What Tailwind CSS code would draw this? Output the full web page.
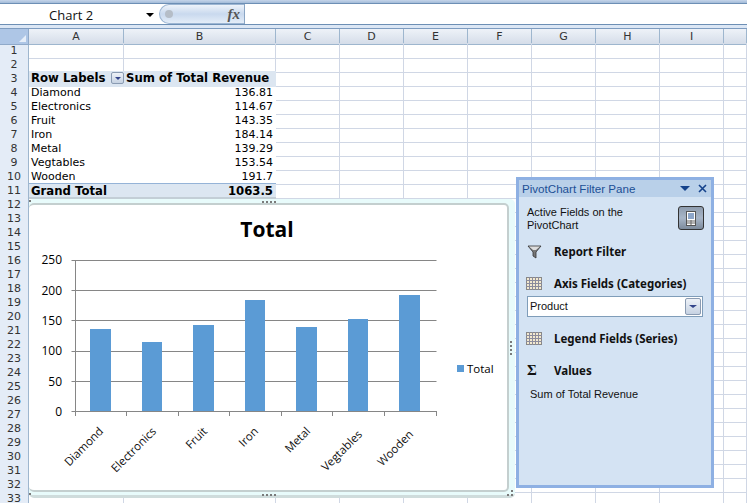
<!DOCTYPE html>
<html lang="en">
<head>
  <meta charset="UTF-8">
  <title>PivotChart</title>
  <script src="https://cdn.jsdelivr.net/npm/@tailwindcss/browser@4"></script>
</head>
<body class="w-[747px] h-[503px] overflow-hidden bg-white">
  <div class="relative w-[747px] h-[503px] overflow-hidden">
    <!-- Formula bar -->
    <div class="h-[3px] bg-gradient-to-b from-[#c5d5ea] to-[#a3bbd8]"></div>
    <div class="h-[22px] flex items-stretch bg-white border-y border-[#6d8fb5]">
      <div class="w-[159px] flex items-center relative">
        <span class="ml-[49px] mt-[3px] text-[13px] text-[#111] font-['Open_Sans',sans-serif]">Chart 2</span>
        <span class="absolute left-[146px] top-[9px] w-0 h-0 border-x-[4px] border-x-transparent border-t-[4px] border-t-black"></span>
      </div>
      <div class="w-[85px] h-[20px] relative rounded-l-full border border-[#9db6d3] border-r-0 bg-gradient-to-b from-[#eef3fa] via-[#c9d9ee] to-[#e4edf8] flex items-center justify-end pr-[4px]">
        <span class="absolute left-[5px] top-[5px] w-[8px] h-[8px] rounded-full bg-[#b5bdc7]"></span>
        <span class="text-[15px] font-bold italic text-[#555] font-['Liberation_Serif',serif]">fx</span>
      </div>
      <div class="flex-1 border-l border-[#8aa5c4]"></div>
    </div>
    <div class="h-[3px] bg-[#dce7f5]"></div>
    <!-- Sheet grid -->
    <div id="sheet" class="border-t border-[#7e9cc0]"></div>

    <!-- Chart -->
    <div class="absolute left-[29px] top-[199px] w-[486px] h-[299px] rounded-[5px] bg-[#e8fbfb] border-b-[3px] border-b-[#cfdcdc]">
      <div class="absolute left-0 top-[4px] w-[480px] h-[289px] rounded-[5px] bg-white border-t-2 border-b-2 border-r-2 border-[#c4cfcf]"></div>
      <svg class="absolute left-0 top-0" width="486" height="299" viewBox="29 199 486 299" font-family="'Open Sans',sans-serif">
        <g stroke="#868686" stroke-width="1">
          <path d="M71.5 260.5H436.5M71.5 290.5H436.5M71.5 320.5H436.5M71.5 351.5H436.5M71.5 381.5H436.5M71.5 411.5H436.5"/>
          <path d="M75.5 260V416M126.5 411V416M178.5 411V416M229.5 411V416M281.5 411V416M332.5 411V416M384.5 411V416M436.5 411V416"/>
        </g>
        <g fill="#5b9bd5">
          <rect x="90" y="329" width="21" height="82"/>
          <rect x="142" y="342" width="20" height="69"/>
          <rect x="193" y="325" width="21" height="86"/>
          <rect x="245" y="300" width="20" height="111"/>
          <rect x="296" y="327" width="21" height="84"/>
          <rect x="348" y="319" width="20" height="92"/>
          <rect x="399" y="295" width="21" height="116"/>
          <rect x="457" y="365" width="7" height="7"/>
        </g>
        <g font-size="12" fill="#000" text-anchor="end">
          <text x="62" y="264">250</text>
          <text x="62" y="295">200</text>
          <text x="62" y="325">150</text>
          <text x="62" y="355">100</text>
          <text x="62" y="386">50</text>
          <text x="62" y="416">0</text>
        </g>
        <text x="267" y="237" font-size="21" font-weight="700" text-anchor="middle" fill="#000">Total</text>
        <text x="467" y="373" font-size="11.5" fill="#000">Total</text>
        <g font-size="11.5" fill="#111" text-anchor="end">
          <text transform="translate(104 432) rotate(-45)">Diamond</text>
          <text transform="translate(157 432) rotate(-45)">Electronics</text>
          <text transform="translate(208 432) rotate(-45)">Fruit</text>
          <text transform="translate(259 432) rotate(-45)">Iron</text>
          <text transform="translate(311 432) rotate(-45)">Metal</text>
          <text transform="translate(363 435) rotate(-45)">Vegtables</text>
          <text transform="translate(414 435) rotate(-45)">Wooden</text>
        </g>
        <g fill="#7a7a7a">
          <path d="M262 201h2v2h-2zM266 201h2v2h-2zM270 201h2v2h-2zM274 201h2v2h-2z"/>
          <path d="M262 494h2v2h-2zM266 494h2v2h-2zM270 494h2v2h-2zM274 494h2v2h-2z"/>
          <path d="M510 341h2v2h-2zM510 345h2v2h-2zM510 349h2v2h-2zM510 353h2v2h-2z"/>
          <path d="M29 200h2v2h-2zM29 493h2v2h-2zM507 494h2v2h-2zM511 494h2v2h-2zM511 490h2v2h-2z"/>
        </g>
      </svg>
    </div>

    <!-- PivotChart Filter Pane -->
    <div class="absolute left-[516px] top-[177px] w-[198px] h-[311px] border-[3px] border-[#8eb0e3] bg-[#d4e3f3] flex flex-col font-['Liberation_Sans',sans-serif] text-[11px] leading-[13px] text-[#111]">
      <div class="h-[17px] shrink-0 bg-[#b9d0e9] flex items-center pl-[3px] pr-[4px]">
        <span class="flex-1 text-[11.6px] text-[#1c4f95] whitespace-nowrap">PivotChart Filter Pane</span>
        <span class="w-0 h-0 border-x-[5px] border-x-transparent border-t-[5px] border-t-[#15428b] mr-[8px]"></span>
        <svg width="9" height="9" viewBox="0 0 9 9" stroke="#15428b" stroke-width="1.6"><path d="M1 1L8 8M8 1L1 8"/></svg>
      </div>
      <div class="flex justify-between pl-[8px] pr-[7px] pt-[9px] h-[42px] shrink-0">
        <span class="block w-[110px]">Active Fields on the PivotChart</span>
        <span class="w-[26px] h-[24px] rounded-[3px] border border-[#333] bg-gradient-to-b from-[#8e9cae] via-[#a8b6c8] to-[#7d8b9c] flex items-center justify-center">
          <svg width="10" height="15" viewBox="0 0 10 15"><rect x="0.5" y="0.5" width="9" height="14" fill="#fff" stroke="#555"/><path d="M2 3H8M2 5H8M2 7H8" stroke="#1c4f95"/><path d="M1 10H9M1 12H9M5 9V14" stroke="#666"/></svg>
        </span>
      </div>
      <div class="flex items-center h-[17px] mt-[4px] pl-[8px] shrink-0">
        <svg class="w-[15px] h-[14px]" viewBox="0 0 15 14"><path d="M1 1H14L9 7V13L6 11V7Z" fill="#777" stroke="#333" stroke-width="0.8"/><path d="M2 1.5H13L9 5H6Z" fill="#ddd"/></svg>
        <span class="ml-[12px] font-bold text-[11.5px] font-['Noto_Sans',sans-serif]">Report Filter</span>
      </div>
      <div class="flex items-center h-[17px] mt-[15px] pl-[7px] shrink-0">
        <svg class="w-[16px] h-[13px]" viewBox="0 0 16 13"><rect x="0.5" y="0.5" width="15" height="12" fill="#f3e9cf" stroke="#888"/><path d="M0 3.5H16M0 6.5H16M0 9.5H16M3.5 0V13M6.5 0V13M9.5 0V13M12.5 0V13" stroke="#8c8c9c"/></svg>
        <span class="ml-[12px] font-bold text-[11.5px] font-['Noto_Sans',sans-serif] whitespace-nowrap">Axis Fields (Categories)</span>
      </div>
      <div class="mt-[4px] ml-[8px] w-[176px] h-[21px] shrink-0 bg-white border border-[#7f9db9] flex items-center justify-between pl-[2px] pr-[1px]">
        <span>Product</span>
        <span class="w-[16px] h-[17px] rounded-[2px] border border-[#8a9bb2] bg-gradient-to-b from-[#eef2f8] to-[#c6d2e2] flex items-center justify-center">
          <span class="w-0 h-0 border-x-[4px] border-x-transparent border-t-[3px] border-t-[#33448a]"></span>
        </span>
      </div>
      <div class="flex items-center h-[17px] mt-[13px] pl-[7px] shrink-0">
        <svg class="w-[16px] h-[13px]" viewBox="0 0 16 13"><rect x="0.5" y="0.5" width="15" height="12" fill="#f3e9cf" stroke="#888"/><path d="M0 3.5H16M0 6.5H16M0 9.5H16M3.5 0V13M6.5 0V13M9.5 0V13M12.5 0V13" stroke="#8c8c9c"/></svg>
        <span class="ml-[12px] font-bold text-[11.5px] font-['Noto_Sans',sans-serif] whitespace-nowrap">Legend Fields (Series)</span>
      </div>
      <div class="flex items-center h-[17px] mt-[15px] pl-[8px] shrink-0">
        <span class="w-[15px] font-bold text-[15px] font-['Liberation_Serif',serif]">Σ</span>
        <span class="ml-[12px] font-bold text-[11.5px] font-['Noto_Sans',sans-serif]">Values</span>
      </div>
      <div class="mt-[9px] pl-[11px]">Sum of Total Revenue</div>
    </div>
  </div>

  <script>
    // Build the worksheet rows
    const colLetters = ['A', 'B', 'C', 'D', 'E', 'F', 'G', 'H', 'I', ''];
    const gridCols = 'grid grid-cols-[29px_95px_152px_64px_64px_64px_64px_64px_64px_64px_23px]';
    const pivot = {
      3: ['Row Labels', 'Sum of Total Revenue'],
      4: ['Diamond', '136.81'],
      5: ['Electronics', '114.67'],
      6: ['Fruit', '143.35'],
      7: ['Iron', '184.14'],
      8: ['Metal', '139.29'],
      9: ['Vegtables', '153.54'],
      10: ['Wooden', '191.7'],
      11: ['Grand Total', '1063.5']
    };
    let html = `<div class="${gridCols} h-[14px] font-['DejaVu_Sans',sans-serif] text-[11px] leading-[15px] text-[#333]">
      <div class="relative bg-[#aec6e6] border-r border-b border-[#8fa9c9]"><span class="absolute right-[2px] bottom-[2px] w-0 h-0 border-l-[7px] border-l-transparent border-b-[7px] border-b-[#e6eef9]"></span></div>`;
    colLetters.forEach(c => {
      html += `<div class="bg-gradient-to-b from-[#eef2f8] to-[#d5dde9] border-r border-b border-[#9eb6ce] text-center">${c}</div>`;
    });
    html += '</div>';
    for (let r = 1; r <= 33; r++) {
      html += `<div class="${gridCols} h-[14px] font-['DejaVu_Sans',sans-serif] text-[11px] leading-[15px] text-black">`;
      html += `<div class="bg-[#e4ecf7] border-r border-b border-[#9eb6ce] text-center text-[#333]">${r}</div>`;
      const isHead = r === 3 || r === 11;
      colLetters.forEach((c, i) => {
        if (pivot[r] && i < 2) {
          const tone = isHead ? 'bg-[#dce6f1] font-bold text-[11.7px]' : '';
          const line = r === 11 ? 'border-t border-[#95b3d7]' : '';
          const align = i === 1 && r !== 3 ? 'text-right pr-[3px]' : 'pl-[2px]';
          const gap = r === 3 && i === 0 ? 'relative' : '';
          const btn = r === 3 && i === 0 ? '<span class="absolute right-[0px] top-[1px] w-[13px] h-[12px] rounded-[2px] border border-[#8a9bb2] bg-gradient-to-b from-[#eef2f8] to-[#c6d2e2] flex items-center justify-center"><span class="w-0 h-0 border-x-[3px] border-x-transparent border-t-[3px] border-t-[#33448a]"></span></span>' : '';
          html += `<div class="${tone} ${line} ${align} ${gap} whitespace-nowrap">${pivot[r][i]}${btn}</div>`;
        } else if (r === 12 && i < 2) {
          // shaded line under the Grand Total row
          html += '<div class="border-t-2 border-[#c3ced6]"></div>';
        } else {
          html += '<div class="border-r border-b border-[#d0d7e5]"></div>';
        }
      });
      html += '</div>';
    }
    document.getElementById('sheet').innerHTML = html;
  </script>
</body>
</html>
